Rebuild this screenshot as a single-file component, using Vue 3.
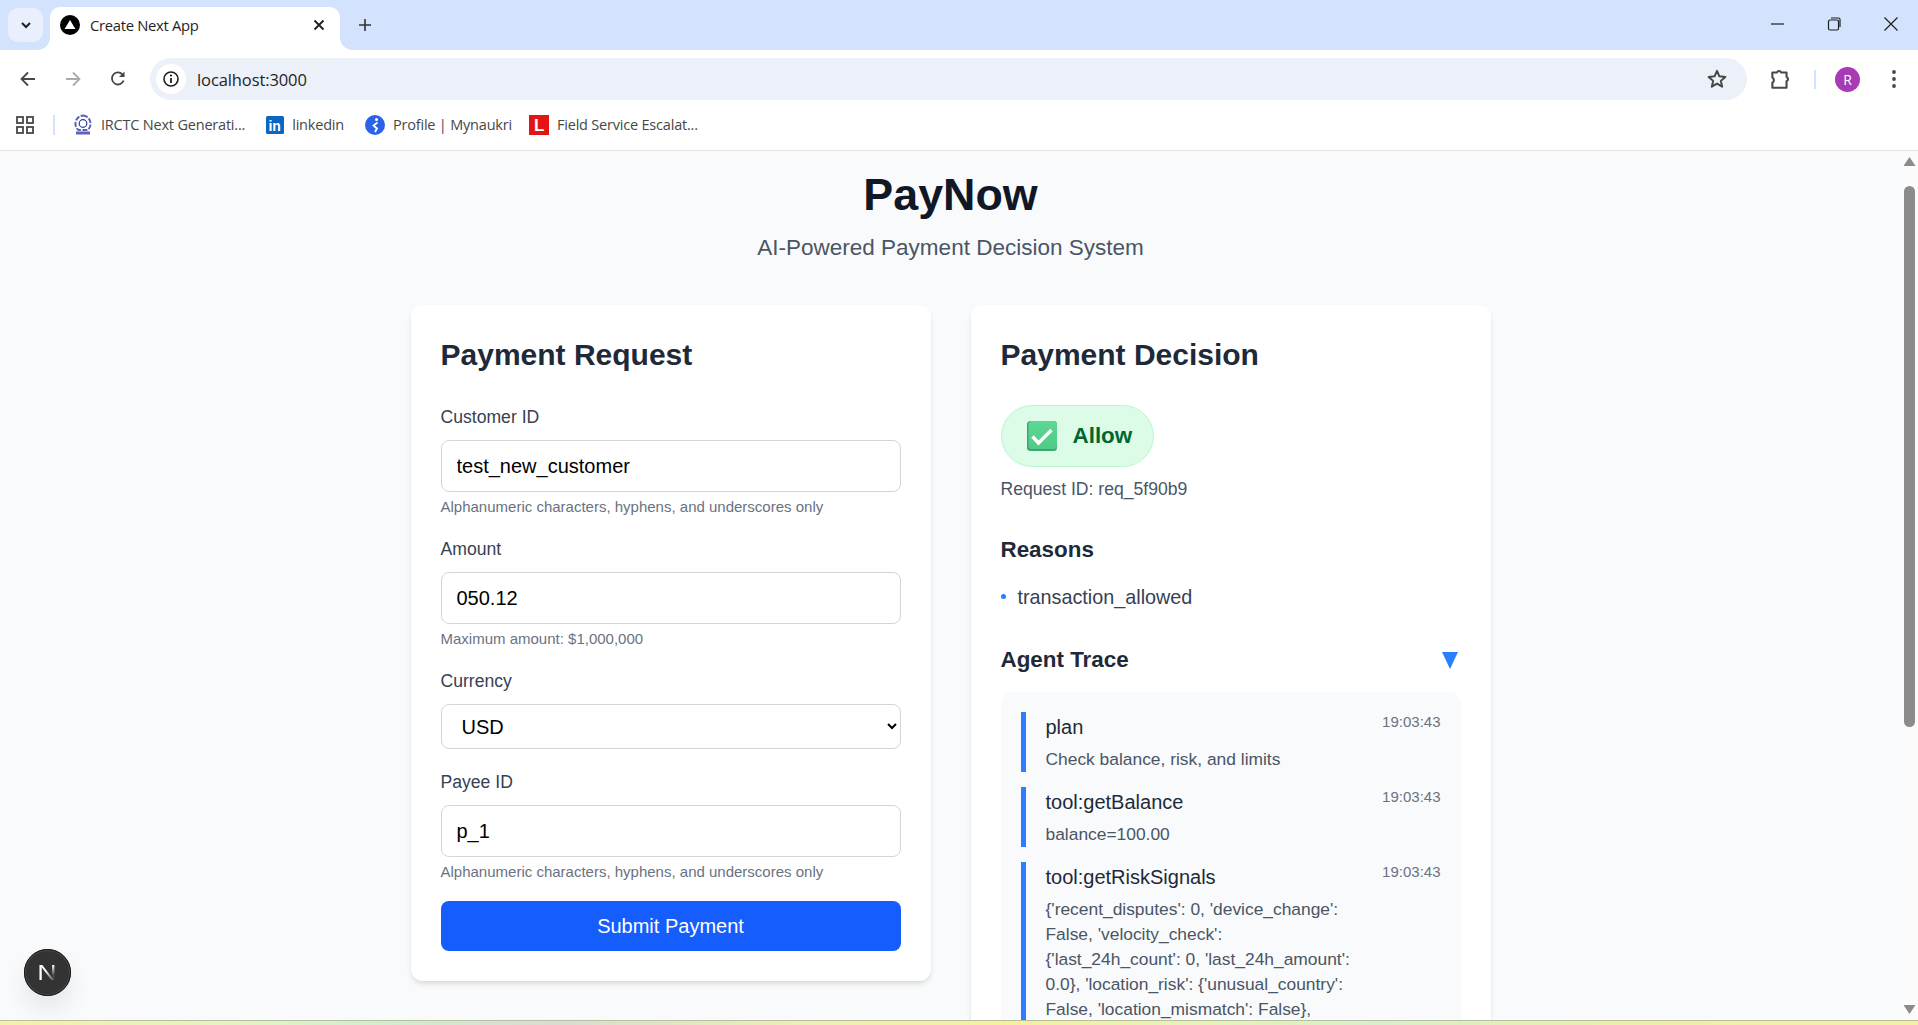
<template>
  <div class="window">
    <!-- browser chrome -->
    <div class="tabstrip">
      <button class="tab-search">
        <svg width="14" height="14" viewBox="0 0 14 14"><path d="M3 5l4 4 4-4" fill="none" stroke="#1f1f1f" stroke-width="2" /></svg>
      </button>
      <div class="tab">
        <svg class="favicon" width="20" height="20" viewBox="0 0 20 20"><circle cx="10" cy="10" r="10" fill="#000" /><path d="M10 5l5.4 9H4.6z" fill="#fff" /></svg>
        <span class="tab-title">Create Next App</span>
        <svg width="14" height="14" viewBox="0 0 14 14"><path d="M2.5 2.5l9 9M11.5 2.5l-9 9" stroke="#1f1f1f" stroke-width="1.8" /></svg>
      </div>
      <svg class="new-tab" width="16" height="16" viewBox="0 0 16 16"><path d="M8 2v12M2 8h12" stroke="#333" stroke-width="1.6" /></svg>
      <div class="window-controls">
        <svg width="16" height="16" viewBox="0 0 16 16"><path d="M2 8h13" stroke="#1f1f1f" stroke-width="1.2" /></svg>
        <svg width="16" height="16" viewBox="0 0 16 16"><rect x="2.5" y="4" width="10" height="10" rx="1.5" fill="none" stroke="#1f1f1f" stroke-width="1.2" /><path d="M5 2h7.5A1.5 1.5 0 0 1 14 3.500V11" fill="none" stroke="#1f1f1f" stroke-width="1.200" /></svg>
        <svg width="16" height="16" viewBox="0 0 16 16"><path d="M1.500 1.500l13 13M14.500 1.500l-13 13" stroke="#1f1f1f" stroke-width="1.200" /></svg>
      </div>
    </div>

    <div class="toolbar">
      <div class="nav-icons">
        <svg width="20" height="20" viewBox="0 0 20 20"><path d="M17 10H4M10 3.500L3.500 10l6.500 6.500" fill="none" stroke="#474747" stroke-width="1.800" /></svg>
        <svg width="20" height="20" viewBox="0 0 20 20"><path d="M3 10h13M10 3.500l6.500 6.500-6.500 6.500" fill="none" stroke="#a9abad" stroke-width="1.800" /></svg>
        <svg width="20" height="20" viewBox="0 0 20 20"><path d="M15.600 11.500A6 6 0 1 1 14.300 5.300L16 7" fill="none" stroke="#474747" stroke-width="1.800" /><path d="M16.500 2.500v5.500H11z" fill="#474747" /></svg>
      </div>
      <div class="omnibox">
        <span class="site-info">
          <svg width="18" height="18" viewBox="0 0 18 18"><circle cx="9" cy="9" r="7" fill="none" stroke="#1f1f1f" stroke-width="1.600" /><path d="M9 8v5" stroke="#1f1f1f" stroke-width="1.800" /><circle cx="9" cy="5.500" r="1.100" fill="#1f1f1f" /></svg>
        </span>
        <span class="url">localhost:3000</span>
        <svg class="star" width="22" height="22" viewBox="0 0 20 20"><path d="M10 2.600l2.200 5 5.400.5-4.100 3.600 1.200 5.300L10 14.200 5.300 17l1.200-5.300L2.400 8.100l5.400-.5z" fill="none" stroke="#474747" stroke-width="1.800" stroke-linejoin="round" /></svg>
      </div>
      <svg class="puzzle" width="24" height="24" viewBox="0 0 22 22"><path d="M4 5h4.200a2 2 0 0 1 3.800 0H17v4.200a2 2 0 0 1 0 3.800V19H4v-4.600a2.600 2.600 0 0 0 1.400-2.400A2.600 2.600 0 0 0 4 9.600z" fill="none" stroke="#474747" stroke-width="1.900" stroke-linejoin="round" /></svg>
      <span class="toolbar-sep"></span>
      <span class="avatar">R</span>
      <svg class="kebab" width="6" height="20" viewBox="0 0 6 20"><circle cx="3" cy="3" r="1.900" fill="#474747" /><circle cx="3" cy="10" r="1.900" fill="#474747" /><circle cx="3" cy="17" r="1.900" fill="#474747" /></svg>
    </div>

    <div class="bookmarks">
      <svg class="apps" width="18" height="18" viewBox="0 0 18 18"><g fill="none" stroke="#474747" stroke-width="1.800"><rect x="1" y="1" width="6" height="6" /><rect x="11" y="1" width="6" height="6" /><rect x="1" y="11" width="6" height="6" /><rect x="11" y="11" width="6" height="6" /></g></svg>
      <span class="bm-sep"></span>
      <span class="bm bm-irctc">
        <svg width="20" height="22" viewBox="0 0 20 22"><path d="M10 1.500a8 8 0 0 1 7.500 8.500c0 3-1.500 5-3 6h-9c-1.500-1-3-3-3-6A8 8 0 0 1 10 1.500z" fill="none" stroke="#5a63b8" stroke-width="2" stroke-dasharray="5 1.500" /><circle cx="10" cy="9.500" r="3.800" fill="#fff" stroke="#2f3a94" stroke-width="1.200" /><rect x="3" y="17.500" width="14" height="3" fill="#5a63b8" /></svg>
        IRCTC Next Generati...
      </span>
      <span class="bm bm-linkedin">
        <svg width="18" height="18" viewBox="0 0 18 18"><rect width="18" height="18" rx="1.500" fill="#0a66c2" /><text x="2.500" y="14.500" class="in-mark">in</text></svg>
        linkedin
      </span>
      <span class="bm bm-naukri">
        <svg width="20" height="20" viewBox="0 0 20 20"><circle cx="10" cy="10" r="10" fill="#2b62e8" /><circle cx="11.500" cy="4.500" r="1.500" fill="#fff" /><path d="M12.500 7.500L8.500 10.500l3.500 3-2 3.500" fill="none" stroke="#fff" stroke-width="1.800" /></svg>
        Profile | Mynaukri
      </span>
      <span class="bm bm-field">
        <svg width="20" height="20" viewBox="0 0 20 20"><rect width="20" height="20" fill="#e31414" /><text x="5" y="16" class="l-mark">L</text></svg>
        Field Service Escalat...
      </span>
    </div>

    <!-- page -->
    <div class="viewport">
      <main class="page">
        <header class="page-head">
          <h1>PayNow</h1>
          <p>AI-Powered Payment Decision System</p>
        </header>

        <div class="columns">
          <section class="card">
            <h2>Payment Request</h2>
            <form @submit.prevent>
              <div class="field">
                <label>Customer ID</label>
                <input type="text" value="test_new_customer" />
                <small>Alphanumeric characters, hyphens, and underscores only</small>
              </div>
              <div class="field">
                <label>Amount</label>
                <input type="text" value="050.12" />
                <small>Maximum amount: $1,000,000</small>
              </div>
              <div class="field">
                <label>Currency</label>
                <select>
                  <option>USD</option>
                </select>
              </div>
              <div class="field">
                <label>Payee ID</label>
                <input type="text" value="p_1" />
                <small>Alphanumeric characters, hyphens, and underscores only</small>
              </div>
              <button class="submit" type="submit">Submit Payment</button>
            </form>
          </section>

          <section class="card">
            <h2>Payment Decision</h2>
            <div class="decision">
              <svg width="30" height="30" viewBox="0 0 30 30">
                <defs>
                  <linearGradient id="check-box" x1="0" y1="0" x2="0" y2="1">
                    <stop offset="0" stop-color="#5dd894" />
                    <stop offset="1" stop-color="#4fca87" />
                  </linearGradient>
                </defs>
                <rect width="30" height="30" rx="3.500" fill="#3ea56f" />
                <rect width="28.500" height="28" rx="3.500" x="1.500" fill="url(#check-box)" />
                <path d="M5.500 15.500l6 6.500L24.500 9" fill="none" stroke="#fff" stroke-width="3.400" />
              </svg>
              <span>Allow</span>
            </div>
            <p class="request-id">Request ID: req_5f90b9</p>

            <h3 class="reasons-title">Reasons</h3>
            <ul class="reasons">
              <li>transaction_allowed</li>
            </ul>

            <div class="trace-head">
              <h3>Agent Trace</h3>
              <svg width="16" height="17" viewBox="0 0 16 17"><path d="M0 0h16L8 17z" fill="#2b7fff" /></svg>
            </div>
            <div class="trace">
              <div v-for="step in steps" :key="step.name" class="step">
                <div class="step-body">
                  <div class="step-name">{{ step.name }}</div>
                  <div class="step-detail">{{ step.detail }}</div>
                </div>
                <span class="step-time">{{ step.time }}</span>
              </div>
            </div>
          </section>
        </div>
      </main>

      <div class="scrollbar">
        <span class="arrow-up"></span>
        <span class="thumb"></span>
        <span class="arrow-down"></span>
      </div>

      <div class="dev-badge">
        <svg width="23" height="23" viewBox="0 0 20 20">
          <defs>
            <linearGradient id="n-fade" x1="0" y1="0" x2="1" y2="1">
              <stop offset="0.4" stop-color="#fff" />
              <stop offset="1" stop-color="#fff" stop-opacity="0.15" />
            </linearGradient>
            <linearGradient id="n-right" x1="0" y1="0" x2="0" y2="1">
              <stop offset="0" stop-color="#fff" />
              <stop offset="0.7" stop-color="#fff" stop-opacity="0.1" />
            </linearGradient>
          </defs>
          <rect x="3" y="3.500" width="2" height="13" fill="#fff" />
          <path d="M3.500 3.500h2l10 13h-2.200z" fill="url(#n-fade)" />
          <rect x="14" y="3.500" width="2" height="13" fill="url(#n-right)" />
        </svg>
      </div>
    </div>

    <div class="taskbar-edge"></div>
  </div>
</template>

<script setup>
const steps = [
  { name: 'plan', detail: 'Check balance, risk, and limits', time: '19:03:43' },
  { name: 'tool:getBalance', detail: 'balance=100.00', time: '19:03:43' },
  {
    name: 'tool:getRiskSignals',
    detail:
      "{'recent_disputes': 0, 'device_change': False, 'velocity_check': {'last_24h_count': 0, 'last_24h_amount': 0.0}, 'location_risk': {'unusual_country': False, 'location_mismatch': False},",
    time: '19:03:43',
  },
]
</script>

<style>
html,
body {
  margin: 0;
  height: 100%;
  overflow: hidden;
}
</style>

<style scoped>
.window {
  display: flex;
  flex-direction: column;
  height: 1025px;
  font-family: "Liberation Sans", Arial, sans-serif;
  overflow: hidden;
  background: #fff;
}

.tabstrip {
  display: flex;
  align-items: flex-end;
  height: 50px;
  background: #d3e3fd;
  flex: none;
  position: relative;
}

.tab-search {
  display: flex;
  align-items: center;
  justify-content: center;
  width: 35px;
  height: 34px;
  margin: 0 7px 8px 8px;
  padding: 0;
  border: none;
  border-radius: 10px;
  background: #e9effc;
}

.tab {
  display: flex;
  align-items: center;
  width: 290px;
  height: 43px;
  padding: 0 14px 7px 10px;
  box-sizing: border-box;
  background: #fff;
  border-radius: 10px 10px 0 0;
  position: relative;
  color: #1f1f1f;
}

.tab::before,
.tab::after {
  content: "";
  position: absolute;
  bottom: 0;
  width: 12px;
  height: 12px;
}

.tab::before {
  left: -12px;
  background: radial-gradient(circle at 0 0, transparent 11.500px, #fff 12px);
}

.tab::after {
  right: -12px;
  background: radial-gradient(circle at 100% 0, transparent 11.500px, #fff 12px);
}

.tab-title {
  flex: 1;
  margin-left: 10px;
  font-family: "Open Sans", sans-serif;
  font-size: 14.800px;
  letter-spacing: -0.3px;
}

.new-tab {
  margin: 0 0 17px 17px;
}

.window-controls {
  display: flex;
  gap: 41px;
  margin-left: auto;
  margin-right: 19px;
  margin-bottom: 18px;
  align-self: flex-end;
}

.toolbar {
  display: flex;
  align-items: center;
  height: 58px;
  flex: none;
  background: #fff;
  border-radius: 12px 12px 0 0;
  position: relative;
}

.nav-icons {
  display: flex;
  gap: 25px;
  margin-left: 18px;
  width: 132px;
}

.omnibox {
  display: flex;
  align-items: center;
  width: 1597px;
  height: 42px;
  box-sizing: border-box;
  padding: 0 19px 0 6px;
  background: #ebf0f9;
  border-radius: 21px;
}

.site-info {
  display: flex;
  align-items: center;
  justify-content: center;
  width: 30px;
  height: 30px;
  border-radius: 50%;
  background: #fff;
}

.url {
  flex: 1;
  margin-left: 11px;
  font-family: "Open Sans", sans-serif;
  font-size: 16.500px;
  letter-spacing: -0.1px;
  color: #1f1f1f;
}

.puzzle {
  margin-left: 21px;
}

.toolbar-sep {
  width: 2px;
  height: 19px;
  margin-left: 22px;
  background: #d3e3fd;
}

.avatar {
  display: flex;
  align-items: center;
  justify-content: center;
  width: 25px;
  height: 25px;
  margin-left: 19px;
  border-radius: 50%;
  background: #a83ab5;
  color: #fff;
  font-size: 14px;
  font-family: "Open Sans", sans-serif;
}

.kebab {
  margin-left: 31px;
}

.bookmarks {
  display: flex;
  align-items: center;
  height: 43px;
  padding-bottom: 9px;
  box-sizing: border-box;
  flex: none;
  background: #fff;
  border-bottom: 1px solid #e1e3e1;
  font-family: "Open Sans", sans-serif;
  font-size: 14.500px;
  letter-spacing: -0.2px;
  color: #474747;
}

.apps {
  margin-left: 16px;
}

.bm-sep {
  width: 2px;
  height: 20px;
  margin-left: 19px;
  background: #d3e3fd;
}

.bm {
  display: flex;
  align-items: center;
  gap: 8px;
  white-space: nowrap;
}

.bm-irctc {
  margin-left: 18px;
}

.bm-linkedin {
  margin-left: 21px;
}

.bm-naukri {
  margin-left: 21px;
}

.bm-field {
  margin-left: 17px;
}

.in-mark {
  font: bold 14px "Liberation Sans", sans-serif;
  fill: #fff;
}

.l-mark {
  font: bold 17px "Liberation Sans", sans-serif;
  fill: #fff;
}

.viewport {
  display: flex;
  flex: 1;
  min-height: 0;
  position: relative;
  background: #f9fafb;
}

.page {
  flex: 1;
  min-width: 0;
  padding-top: 17px;
  overflow: hidden;
}

.page-head {
  text-align: center;
  margin-bottom: 44px;
}

.page-head h1 {
  margin: 0 0 15px;
  font-size: 44.800px;
  line-height: 52px;
  font-weight: 700;
  color: #101828;
}

.page-head p {
  margin: 0;
  font-size: 22.500px;
  line-height: 26px;
  color: #4a5565;
}

.columns {
  display: grid;
  grid-template-columns: 520px 520px;
  justify-content: center;
  gap: 40px;
  align-items: start;
}

.card {
  padding: 30px;
  background: #fff;
  border-radius: 12px;
  box-shadow: 0 4px 6px -1px rgba(0, 0, 0, 0.1), 0 2px 4px -2px rgba(0, 0, 0, 0.1);
}

h2 {
  margin: 0 0 29px;
  font-size: 30px;
  line-height: 40px;
  font-weight: 700;
  color: #1e2939;
}

.field {
  display: flex;
  flex-direction: column;
  margin-bottom: 20px;
}

.field label {
  margin-bottom: 10px;
  font-size: 17.600px;
  line-height: 26px;
  color: #364153;
}

.field input,
.field select {
  width: 100%;
  box-sizing: border-box;
  padding: 0 15px;
  border: 1.500px solid #d1d5dc;
  border-radius: 8px;
  background: #fff;
  font-family: inherit;
  font-size: 20px;
  color: #000;
  outline: none;
}

.field input {
  height: 52px;
}

.field select {
  height: 45px;
  padding-left: 16px;
}

.field small {
  margin-top: 5px;
  font-size: 15px;
  line-height: 20px;
  color: #6a7282;
  margin-bottom: -1px;
}

.submit {
  display: block;
  width: 100%;
  height: 50px;
  margin-top: 1px;
  border: none;
  border-radius: 8px;
  background: #155dfc;
  color: #fff;
  font-family: inherit;
  font-size: 20px;
}

.decision {
  display: inline-flex;
  align-items: center;
  gap: 16px;
  height: 62px;
  margin-top: 1px;
  box-sizing: border-box;
  padding: 0 21px 0 25px;
  border: 1.500px solid #b9f8cf;
  border-radius: 31px;
  background: #dcfce7;
  color: #016630;
  font-size: 22.400px;
  font-weight: 700;
}

.request-id {
  margin: 9px 0 0;
  font-size: 17.600px;
  line-height: 26px;
  color: #4a5565;
}

h3 {
  margin: 0;
  font-size: 22.400px;
  line-height: 30px;
  font-weight: 700;
  color: #1e2939;
}

.reasons-title {
  margin-top: 33px;
}

.reasons {
  margin: 17px 0 0;
  padding: 0;
  list-style: none;
}

.reasons li {
  position: relative;
  padding-left: 17px;
  font-size: 19.800px;
  line-height: 30px;
  color: #364153;
}

.reasons li::before {
  content: "";
  position: absolute;
  left: 0;
  top: 12px;
  width: 5px;
  height: 5px;
  border-radius: 50%;
  background: #2b7fff;
}

.trace-head {
  display: flex;
  align-items: center;
  justify-content: space-between;
  margin-top: 33px;
  padding-right: 3px;
}

.trace {
  display: flex;
  flex-direction: column;
  gap: 15px;
  margin-top: 17px;
  padding: 20px;
  background: #f9fafb;
  border-radius: 12px;
}

.step {
  display: flex;
  align-items: flex-start;
  justify-content: space-between;
  gap: 30px;
  padding-left: 20px;
  border-left: 5px solid #2b7fff;
}

.step:last-child {
  padding-bottom: 40px;
}

.step-body {
  flex: 1;
  min-width: 0;
}

.step-name {
  font-size: 20px;
  line-height: 30px;
  color: #1e2939;
}

.step-detail {
  margin-top: 5px;
  font-size: 17.400px;
  line-height: 25px;
  color: #4a5565;
}

.step-time {
  flex: none;
  font-size: 15px;
  line-height: 20px;
  color: #6a7282;
}

.scrollbar {
  position: relative;
  flex: none;
  width: 17px;
  display: flex;
  flex-direction: column;
  align-items: center;
  background: #fbfbfb;
}

.arrow-up,
.arrow-down {
  width: 12px;
  height: 9px;
  background: #8b8b8b;
  flex: none;
}

.arrow-up {
  margin-top: 6px;
  clip-path: polygon(50% 0, 100% 100%, 0 100%);
}

.arrow-down {
  margin-top: auto;
  margin-bottom: 6px;
  clip-path: polygon(0 0, 100% 0, 50% 100%);
}

.thumb {
  flex: none;
  width: 11px;
  height: 541px;
  margin-top: 20px;
  border-radius: 6px;
  background: #8b8b8b;
}

.dev-badge {
  position: absolute;
  left: 24px;
  top: 798px;
  display: flex;
  align-items: center;
  justify-content: center;
  width: 47px;
  height: 47px;
  box-sizing: border-box;
  border: 2px solid #4a4a4a;
  border-radius: 50%;
  background: #333;
  outline: 1px solid #111;
  outline-offset: -1px;
  box-shadow: 0 14px 24px rgba(0, 0, 0, 0.08);
}

.taskbar-edge {
  flex: none;
  height: 5px;
  box-sizing: border-box;
  border-top: 1px solid #b9bf9f;
  background: linear-gradient(90deg, #f7f1a6 0%, #e3f4c4 12%, #cfeed0 20%, #d8dcd2 29%, #ecefb4 42%, #f5f09a 52%, #e6f3b8 62%, #d6efcc 72%, #ecefa8 85%, #f5f0a0 100%);
}
</style>
